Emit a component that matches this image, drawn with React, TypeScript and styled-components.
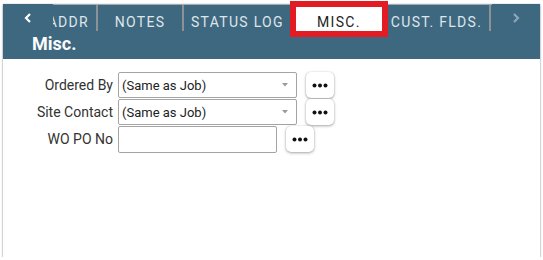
import React from "react";
import styled, { createGlobalStyle } from "styled-components";

const Global = createGlobalStyle`
  html, body { margin: 0; padding: 0; background: #fff; }
  body { font-family: Roboto, "Liberation Sans", Arial, sans-serif; }
  #root { padding: 4px 3px 0 3px; }
`;

const Card = styled.div`
  width: 537px;
  height: 253px;
  box-sizing: border-box;
  background: #fff;
  box-shadow: 0 1px 2px rgba(0, 0, 0, 0.4), 0 0 1px rgba(0, 0, 0, 0.25);
  display: flex;
  flex-direction: column;
`;

const Header = styled.div`
  background: #3e6880;
  display: flex;
  flex-direction: column;
`;

const TabBar = styled.div`
  display: flex;
  height: 27px;
`;

const ArrowBox = styled.div<{ $w: number; $dim?: boolean }>`
  width: ${(p) => p.$w}px;
  flex: none;
  display: flex;
  align-items: center;
  justify-content: center;
  color: ${(p) => (p.$dim ? "#89a8ba" : "#ffffff")};
`;

const TabViewport = styled.div`
  flex: 1;
  min-width: 0;
  display: flex;
  box-sizing: border-box;
  border-top: 1px solid #a1abb1;
`;

const Tab = styled.div<{ $clipped?: boolean }>`
  box-sizing: border-box;
  height: 26px;
  flex: none;
  min-width: ${(p) => (p.$clipped ? "0" : "86px")};
  width: ${(p) => (p.$clipped ? "45px" : "auto")};
  overflow: ${(p) => (p.$clipped ? "hidden" : "visible")};
  padding: 0 7px 1px;
  border-right: 2px solid #8b9195;
  display: flex;
  align-items: flex-end;
  justify-content: ${(p) => (p.$clipped ? "flex-end" : "center")};
  font-size: 14px;
  line-height: 16px;
  letter-spacing: 1.3px;
  color: #dfe5e9;
  white-space: nowrap;
`;

const ActiveTab = styled.div`
  box-sizing: border-box;
  flex: none;
  height: 24px;
  min-width: 86px;
  margin: 2px 2px 0 3px;
  padding: 0 7px 1px;
  background: #fff;
  display: flex;
  align-items: flex-end;
  justify-content: center;
  font-size: 14px;
  line-height: 16px;
  letter-spacing: 1.3px;
  color: #1e1e1e;
  white-space: nowrap;
  position: relative;
  z-index: 1;
  outline: 6px solid #e31b23;
`;

const Title = styled.h1`
  margin: 0;
  padding: 2px 0 5px 29px;
  font-size: 18px;
  line-height: 21px;
  font-weight: 700;
  color: #fbfcfc;
`;

const Form = styled.div`
  display: flex;
  flex-direction: column;
  gap: 1px;
  padding-top: 13px;
`;

const Row = styled.div`
  display: flex;
  align-items: center;
  height: 26px;
`;

const Label = styled.label`
  box-sizing: border-box;
  width: 115px;
  padding-right: 5px;
  text-align: right;
  font-size: 14px;
  color: #333;
  white-space: nowrap;
`;

const SelectBox = styled.div`
  box-sizing: border-box;
  width: 179px;
  height: 26px;
  border: 1px solid #a4a4a4;
  border-radius: 2px;
  padding: 0 8px 0 3px;
  display: flex;
  align-items: center;
  font-size: 13px;
  color: #222;
  background: #fff;
`;

const SelectValue = styled.span`
  flex: 1;
`;

const TextInput = styled.input`
  box-sizing: border-box;
  width: 159px;
  height: 27px;
  border: 1px solid #a4a4a4;
  border-radius: 2px;
  padding: 0 3px;
  font-family: inherit;
  font-size: 13px;
  outline: none;
  background: #fff;
`;

const DotsButton = styled.button`
  width: 28px;
  height: 26px;
  margin-left: 9px;
  padding: 0;
  border: none;
  border-radius: 5px;
  background: #fff;
  box-shadow: 0 1px 3px rgba(0, 0, 0, 0.35), 0 0 1px rgba(0, 0, 0, 0.2);
  display: flex;
  align-items: center;
  justify-content: center;
  color: #111;
`;

const Chevron = ({ dir }: { dir: "left" | "right" }) => (
  <svg width="8" height="10" viewBox="0 0 8 10">
    <polyline
      points={dir === "left" ? "6,1 2,5 6,9" : "2,1 6,5 2,9"}
      fill="none"
      stroke="currentColor"
      strokeWidth="2.2"
    />
  </svg>
);

const Caret = () => (
  <svg width="6" height="4" viewBox="0 0 6 4">
    <polygon points="0,0 6,0 3,3.5" fill="#9a9a9a" />
  </svg>
);

const Dots = () => (
  <svg width="16" height="5" viewBox="0 0 16 5">
    <circle cx="2.5" cy="2.5" r="2" fill="currentColor" />
    <circle cx="8" cy="2.5" r="2" fill="currentColor" />
    <circle cx="13.5" cy="2.5" r="2" fill="currentColor" />
  </svg>
);

export default function App() {
  return (
    <>
      <Global />
      <Card>
        <Header>
          <TabBar>
            <ArrowBox $w={50}>
              <Chevron dir="left" />
            </ArrowBox>
            <TabViewport>
              <Tab $clipped>SITE ADDR</Tab>
              <Tab>NOTES</Tab>
              <Tab>STATUS LOG</Tab>
              <ActiveTab>MISC.</ActiveTab>
              <Tab>CUST. FLDS.</Tab>
            </TabViewport>
            <ArrowBox $w={48} $dim>
              <Chevron dir="right" />
            </ArrowBox>
          </TabBar>
          <Title>Misc.</Title>
        </Header>
        <Form>
          <Row>
            <Label>Ordered By</Label>
            <SelectBox role="combobox">
              <SelectValue>(Same as Job)</SelectValue>
              <Caret />
            </SelectBox>
            <DotsButton>
              <Dots />
            </DotsButton>
          </Row>
          <Row>
            <Label>Site Contact</Label>
            <SelectBox role="combobox">
              <SelectValue>(Same as Job)</SelectValue>
              <Caret />
            </SelectBox>
            <DotsButton>
              <Dots />
            </DotsButton>
          </Row>
          <Row>
            <Label>WO PO No</Label>
            <TextInput />
            <DotsButton>
              <Dots />
            </DotsButton>
          </Row>
        </Form>
      </Card>
    </>
  );
}
